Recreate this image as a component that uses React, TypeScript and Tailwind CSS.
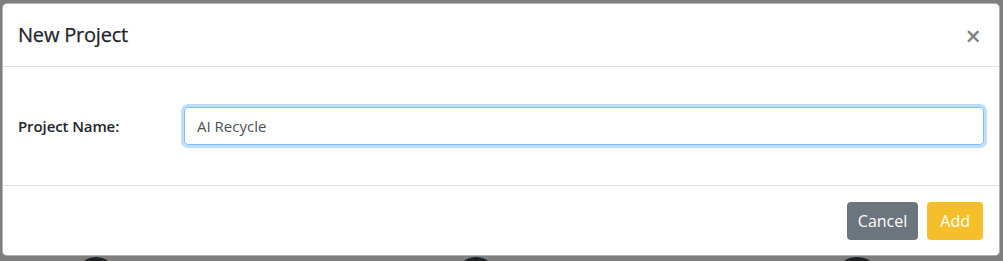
export default function App() {
  return (
    <div className="relative h-[261px] w-[1003px] overflow-hidden bg-[#7f7f7f] font-['Open_Sans',sans-serif] text-[#212529]">
      {/* things behind the backdrop */}
      <div className="absolute left-[76px] top-[257px] h-[40px] w-[40px] rounded-full bg-[#1a2228]" />
      <div className="absolute left-[456px] top-[257px] h-[40px] w-[40px] rounded-full bg-[#1a2228]" />
      <div className="absolute left-[836px] top-[257px] h-[40px] w-[42px] rounded-full bg-[#1a2228]" />

      <div className="px-[2px] pt-[3px]">
        <div className="relative flex w-[998px] flex-col rounded-[5px] border border-black/30 bg-white">
          <div className="flex h-[63px] items-center justify-between border-b border-[#dee2e6] px-[15px]">
            <h5 className="text-[20px] font-medium leading-[30px] tracking-[-0.2px] [-webkit-text-stroke:0.25px_#212529]">New Project</h5>
            <button className="mr-[3px] text-[27px] font-semibold leading-none text-black/50">×</button>
          </div>

          <div className="flex px-[15px] py-[40px]">
            <label className="flex w-[166px] shrink-0 items-center text-[15px] font-semibold tracking-[-0.1px]">Project Name:</label>
            <div className="flex-1">
              <input
                defaultValue="AI Recycle"
                className="h-[38px] w-full rounded-[4px] border border-[#80bdff] px-[12px] text-[15px] text-[#495057] shadow-[0_0_0_3px_rgba(0,123,255,0.25)] outline-none"
              />
            </div>
          </div>

          <div className="flex items-center justify-end gap-[9px] border-t border-[#dee2e6] pb-[15px] pl-[15px] pr-[16px] pt-[16px]">
            <button className="h-[38px] rounded-[4px] bg-[#6c757d] px-[11px] text-[16px] text-white">Cancel</button>
            <button className="h-[38px] rounded-[4px] bg-[#f4bf2a] px-[13px] text-[16px] text-white">Add</button>
          </div>
        </div>
      </div>
    </div>
  )
}
